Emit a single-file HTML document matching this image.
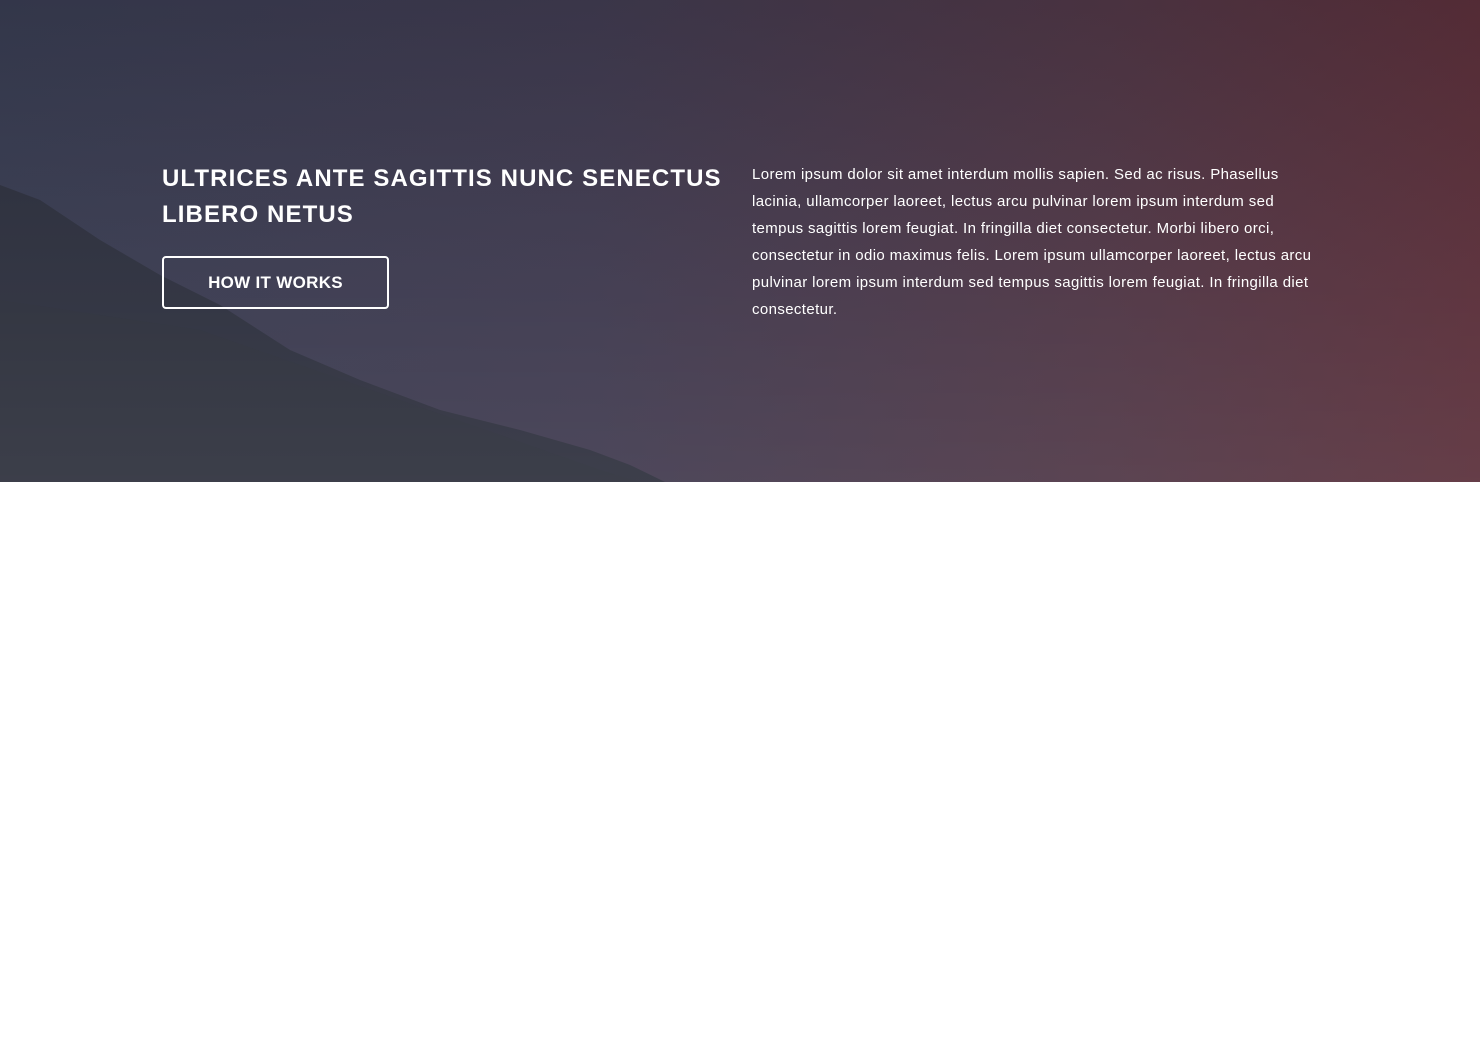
<!DOCTYPE html>
<html><head><style>
body{margin:0;width:1480px;height:1037px;background:#fff;font-family:"Liberation Sans",Arial,sans-serif;overflow:hidden}
.hero{position:absolute;left:0;top:0;width:1480px;height:482px;background:linear-gradient(90deg,#373b50 0%,#3f3a4f 40%,#4f3645 75%,#5a2f3a 100%);overflow:hidden}
.shade{position:absolute;inset:0;background:linear-gradient(180deg,rgba(0,0,0,0.08) 0%,rgba(255,255,255,0.03) 60%,rgba(255,255,255,0.07) 100%)}
h1{position:absolute;left:162px;top:161px;margin:0;color:#fff;font-size:24px;font-weight:bold;letter-spacing:1.1px;line-height:36px;width:600px;white-space:nowrap}
.btn{position:absolute;left:162px;top:256px;width:223px;height:49px;border:2px solid #fff;border-radius:4px;color:#fff;font-weight:bold;font-size:17px;letter-spacing:0.3px;line-height:50px;text-align:center;box-sizing:content-box}
p{position:absolute;left:752px;top:161px;margin:0;width:620px;color:#fff;font-size:15px;line-height:27px;white-space:nowrap;letter-spacing:0.38px}
</style></head><body>
<div class="hero">
<svg width="1480" height="482" style="position:absolute;left:0;top:0">
<polygon points="0,185 40,200 100,240 160,275 220,305 290,350 360,380 440,410 520,430 590,450 630,465 665,482 0,482" fill="#2c303c" opacity="0.9"/>
<polygon points="0,300 200,330 400,400 600,470 640,482 0,482" fill="#2d3339" opacity="0.4"/>
</svg>
<div class="shade"></div>
<h1>ULTRICES ANTE SAGITTIS NUNC SENECTUS<br>LIBERO NETUS</h1>
<div class="btn">HOW IT WORKS</div>
<p>Lorem ipsum dolor sit amet interdum mollis sapien. Sed ac risus. Phasellus<br>lacinia, ullamcorper laoreet, lectus arcu pulvinar lorem ipsum interdum sed<br>tempus sagittis lorem feugiat. In fringilla diet consectetur. Morbi libero orci,<br>consectetur in odio maximus felis. Lorem ipsum ullamcorper laoreet, lectus arcu<br>pulvinar lorem ipsum interdum sed tempus sagittis lorem feugiat. In fringilla diet<br>consectetur.</p>
</div>
</body></html>
